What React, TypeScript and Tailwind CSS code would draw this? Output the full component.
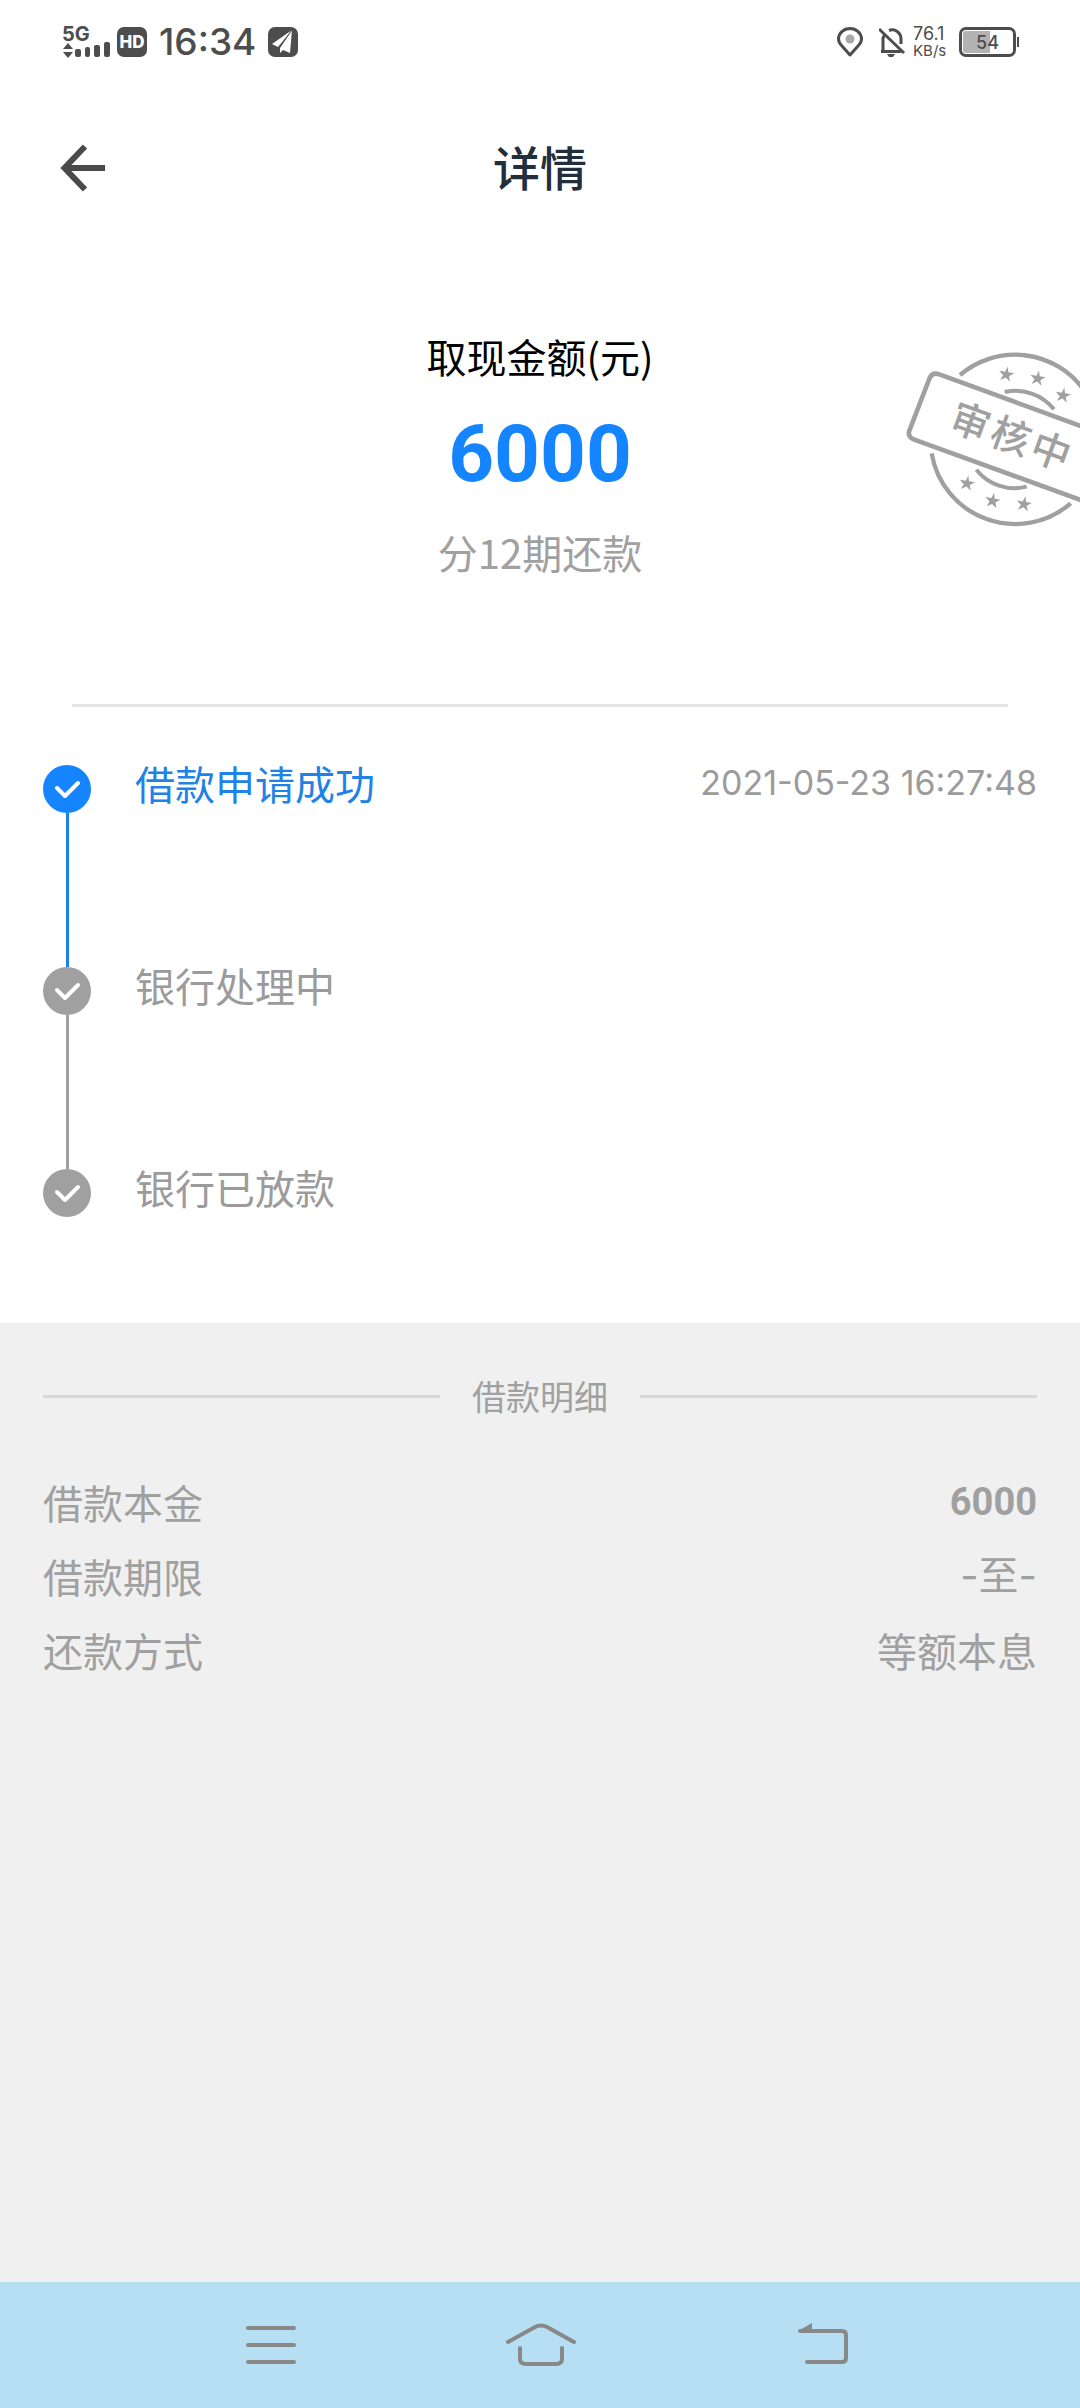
/**
 * Loan detail page
 *
 * Shows the requested amount, the progress of the application
 * and the details of the loan.
 */

import clsx from 'clsx';

const steps = [
  { label: '借款申请成功', time: '2021-05-23 16:27:48', done: true },
  { label: '银行处理中', time: '', done: false },
  { label: '银行已放款', time: '', done: false },
];

const details = [
  { label: '借款本金', value: '6000', valueClass: "font-['Roboto',sans-serif] text-[38px] font-bold" },
  { label: '借款期限', value: '-至-', valueClass: "font-['Inter','Noto_Sans_CJK_SC',sans-serif]" },
  { label: '还款方式', value: '等额本息', valueClass: '' },
];

const stars = [
  [379, 133],
  [473, 145],
  [549, 196],
  [261, 460],
  [338, 512],
  [432, 522],
];

function StatusBar() {
  return (
    <div className="flex h-[84px] items-center justify-between pr-[61px] pl-[62px] font-['Inter',sans-serif] text-[#4d4d4d]">
      <div className="flex items-center">
        <div className="flex w-[55px] flex-col">
          <span className="text-[20px] leading-[16px] font-bold">5G</span>
          <svg className="h-[17px] w-[49px]" viewBox="0 0 49 17" fill="currentColor">
            <path d="M1 7 6 1l5 6zM1 10h10l-5 6z" />
            <rect x="13" y="7" width="6" height="8" rx="2" />
            <rect x="23" y="5" width="5" height="10" rx="2" />
            <rect x="32" y="3" width="6" height="12" rx="2" />
            <rect x="42" y="0" width="6" height="15" rx="2" />
          </svg>
        </div>
        <span className="flex size-[30px] items-center justify-center rounded-[7px] bg-[#4d4d4d] text-[17px] leading-none font-extrabold text-white">
          HD
        </span>
        <time className="ml-3 text-[37px] leading-[44px] font-medium">16:34</time>
        <svg className="ml-3 size-[30px]" viewBox="0 0 30 30">
          <rect width="30" height="30" rx="7" fill="currentColor" />
          <path d="M24 3 4 17l6 3zM24 3 12 21v5l3-3 7 3z" fill="#fff" />
          <path d="M24 3 11 21v5" stroke="currentColor" strokeWidth="1" fill="none" />
        </svg>
      </div>

      <div className="flex items-center">
        <svg className="h-[30px] w-[26px]" viewBox="0 0 26 30" fill="none">
          <path
            d="M13 28 5 19C2 16 1.500 14 1.500 12a11.500 10.500 0 0 1 23 0c0 2-.5 4-3.500 7z"
            stroke="currentColor"
            strokeWidth="3"
            strokeLinejoin="round"
          />
          <circle cx="13" cy="12" r="4.500" fill="#a8a8a8" />
        </svg>
        <svg className="ml-4 h-[30px] w-[26px]" viewBox="0 0 26 30" fill="none">
          <path d="M4 24V11l2-4M10 3.500C16 1 22 6 22 12v5M2 24.500h20" stroke="currentColor" strokeWidth="3" />
          <path d="M0 2 25 26" stroke="currentColor" strokeWidth="3" />
          <path d="M8 27h8l-2 3h-4zM10 3a3 3 0 0 1 5 0z" fill="currentColor" />
        </svg>
        <div className="ml-2 flex w-[46px] flex-col text-[15px] leading-[17px]">
          <span className="text-[18px]">76.1</span>
          <span>KB/s</span>
        </div>
        <div className="relative flex h-[30px] w-[57px] items-center justify-center rounded-[7px] border-3 border-[#4d4d4d] text-[18px] font-medium">
          <span className="absolute inset-y-px left-px w-[27px] rounded-l-[3px] bg-[#b3b3b3]" />
          <span className="relative">54</span>
        </div>
        <span className="ml-px h-[10px] w-[2px] bg-[#4d4d4d]" />
      </div>
    </div>
  );
}

function Header() {
  return (
    <header className="grid h-[168px] grid-cols-[1fr_auto_1fr] items-center px-[60px]">
      <button type="button" aria-label="返回" className="justify-self-start text-[#4a4a4a]">
        <svg className="h-[48px] w-[46px]" viewBox="0 0 46 48" fill="none" stroke="currentColor" strokeWidth="6">
          <path d="M25 2.500 4.500 24 25 45.500M5 24h40" />
        </svg>
      </button>
      <h1 className="pb-1 text-[47px] leading-[56px] font-medium text-[#222e3b]">详情</h1>
    </header>
  );
}

function ReviewStamp() {
  return (
    <svg
      className="absolute top-[98px] right-0 size-[180px]"
      viewBox="60 60 540 540"
      fill="none"
      stroke="#a0a0a0"
      strokeWidth="13"
    >
      <path d="M240 135A254 254 0 0 1 610 178M155 370A254 254 0 0 0 572 520" />
      <path d="M374 186A147 147 0 0 1 522 238M289 419A147 147 0 0 0 440 470" strokeWidth="12" />
      <path d="M610 291 178 133Q157 125 149 144L88 302Q82 320 101 328L610 513" strokeWidth="14" />
      {stars.map(([x, y]) => (
        <path
          key={`${x}-${y}`}
          transform={`translate(${x} ${y}) rotate(10)`}
          d="M0-24 5-7 23-7 9 4 15 20 0 10-15 20-9 4-23-7-5-7z"
          fill="#a0a0a0"
          stroke="none"
        />
      ))}
      <text
        transform="translate(392 320) rotate(20)"
        x="-128 0 128"
        y="42"
        textAnchor="middle"
        fontSize="118"
        fontWeight="500"
        fill="#a0a0a0"
        stroke="none"
      >
        审核中
      </text>
    </svg>
  );
}

function StepIcon({ done }: { done: boolean }) {
  return (
    <svg
      className={clsx('size-[48px] shrink-0', done ? 'text-[#1485ff]' : 'text-[#a0a0a0]')}
      viewBox="0 0 48 48"
      fill="none"
    >
      <circle cx="24" cy="24" r="24" fill="currentColor" />
      <path d="M14 23 22 31 35 18" stroke="#fff" strokeWidth="4" strokeLinecap="round" strokeLinejoin="round" />
    </svg>
  );
}

function Timeline() {
  return (
    <ol className="px-[43px] pt-[58px] pb-[106px] text-[40px] leading-[36px]">
      {steps.map((step, i) => {
        const last = i === steps.length - 1;
        return (
          <li key={step.label} className={clsx('flex', !last && 'h-[202px]')}>
            <div className="mr-11 flex flex-col items-center">
              <StepIcon done={step.done} />
              {!last && <span className={clsx('w-[3px] flex-1', step.done ? 'bg-[#1e82e0]' : 'bg-[#a0a0a0]')} />}
            </div>
            <span className={clsx('flex-1', step.done ? 'text-[#1e82e6]' : 'text-[#9b9b9b]')}>{step.label}</span>
            {step.time && (
              <time className="font-['Inter',sans-serif] text-[34px] text-[#9b9b9b]">{step.time}</time>
            )}
          </li>
        );
      })}
    </ol>
  );
}

function LoanDetails() {
  return (
    <section className="flex-1 bg-[#f0f0f0] px-[43px] pt-[49px] text-[#a0a0a0]">
      <div className="flex items-center gap-8">
        <span className="h-[3px] flex-1 bg-[#d8d8d8]" />
        <h2 className="text-[34px] leading-[48px]">借款明细</h2>
        <span className="h-[3px] flex-1 bg-[#d8d8d8]" />
      </div>
      <dl className="mt-[45px] text-[40px] leading-[74px]">
        {details.map((item) => (
          <div key={item.label} className="flex justify-between">
            <dt>{item.label}</dt>
            <dd className={item.valueClass}>{item.value}</dd>
          </div>
        ))}
      </dl>
    </section>
  );
}

function NavigationBar() {
  return (
    <nav className="grid h-[126px] grid-cols-[270fr_270fr_294fr] items-center bg-[#b6dff3] pr-[110px] pl-[136px] text-[#888]">
      <button type="button" aria-label="菜单" className="justify-self-center">
        <svg className="h-[44px] w-[50px]" viewBox="0 0 50 44" stroke="currentColor" strokeWidth="4" strokeLinecap="round">
          <path d="M2 5h46M2 22h46M2 39h46" />
        </svg>
      </button>
      <button type="button" aria-label="主页" className="justify-self-center">
        <svg
          className="h-[44px] w-[70px]"
          viewBox="0 0 70 44"
          fill="none"
          stroke="currentColor"
          strokeWidth="4"
          strokeLinecap="round"
        >
          <path d="M2 19 29 4Q35 1 41 4L68 19M14 25v11Q14 41 20 41h30Q56 41 56 36V25" />
        </svg>
      </button>
      <button type="button" aria-label="后退" className="justify-self-center">
        <svg
          className="h-[44px] w-[52px]"
          viewBox="0 0 52 44"
          fill="none"
          stroke="currentColor"
          strokeWidth="4"
          strokeLinecap="round"
        >
          <path d="M3 8h42Q49 8 49 12v23Q49 39 45 39H10" />
          <path d="M1 8 15 0v9H2z" fill="currentColor" stroke="none" />
        </svg>
      </button>
    </nav>
  );
}

export default function App() {
  return (
    <div className="flex min-h-screen flex-col bg-white font-['Noto_Sans_CJK_SC',sans-serif]">
      <StatusBar />
      <Header />
      <main className="flex flex-1 flex-col">
        <section className="relative flex flex-col items-center pt-[76px] pb-[124px]">
          <p className="text-[40px] leading-[56px] text-black">取现金额(元)</p>
          <p className="my-5 font-['Roboto',sans-serif] text-[80px] leading-[100px] font-bold text-[#1485ff]">6000</p>
          <p className="text-[40px] leading-[56px] text-[#a0a0a0]">分12期还款</p>
          <ReviewStamp />
        </section>
        <hr className="mx-[72px] border-t-3 border-[#e5e5e5]" />
        <Timeline />
        <LoanDetails />
      </main>
      <NavigationBar />
    </div>
  );
}
